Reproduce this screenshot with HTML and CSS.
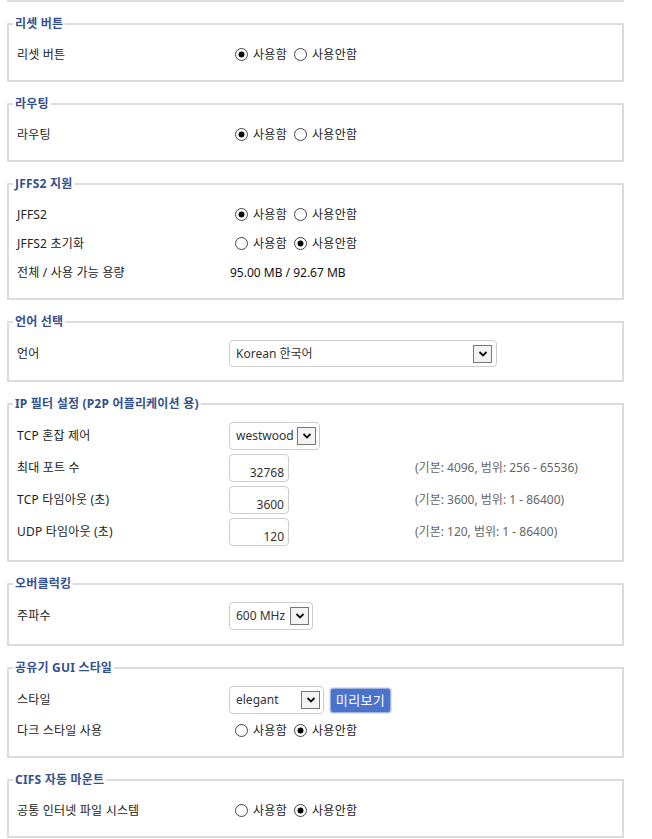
FILE: index.html
```html
<!DOCTYPE html>
<html lang="ko">
<head>
<meta charset="utf-8">
<title>관리 - 시스템</title>
<link rel="stylesheet" href="styles.css">
</head>
<body>
<div class="page">
  <div class="stub"></div>

  <fieldset class="box">
    <legend>리셋 버튼</legend>
    <div class="row">
      <div class="label">리셋 버튼</div>
      <div class="value">
        <label class="opt"><input type="radio" name="reset" checked>사용함</label>
        <label class="opt"><input type="radio" name="reset">사용안함</label>
      </div>
    </div>
  </fieldset>

  <fieldset class="box">
    <legend>라우팅</legend>
    <div class="row">
      <div class="label">라우팅</div>
      <div class="value">
        <label class="opt"><input type="radio" name="routing" checked>사용함</label>
        <label class="opt"><input type="radio" name="routing">사용안함</label>
      </div>
    </div>
  </fieldset>

  <fieldset class="box">
    <legend>JFFS2 지원</legend>
    <div class="row">
      <div class="label">JFFS2</div>
      <div class="value">
        <label class="opt"><input type="radio" name="jffs" checked>사용함</label>
        <label class="opt"><input type="radio" name="jffs">사용안함</label>
      </div>
    </div>
    <div class="row">
      <div class="label">JFFS2 초기화</div>
      <div class="value">
        <label class="opt"><input type="radio" name="jffsclean">사용함</label>
        <label class="opt"><input type="radio" name="jffsclean" checked>사용안함</label>
      </div>
    </div>
    <div class="row">
      <div class="label">전체 / 사용 가능 용량</div>
      <div class="value text">95.00 MB / 92.67 MB</div>
    </div>
  </fieldset>

  <fieldset class="box">
    <legend>언어 선택</legend>
    <div class="row">
      <div class="label">언어</div>
      <div class="value wide">
        <span class="select lang">
          <select><option>Korean 한국어</option></select>
          <span class="arrow"><svg width="10" height="8" viewBox="0 0 10 8"><path d="M1.5 2 L5 5.5 L8.5 2" fill="none" stroke="#111" stroke-width="1.8"/></svg></span>
        </span>
      </div>
    </div>
  </fieldset>

  <fieldset class="box tall">
    <legend>IP 필터 설정 (P2P 어플리케이션 용)</legend>
    <div class="row">
      <div class="label">TCP 혼잡 제어</div>
      <div class="value">
        <span class="select tcp">
          <select><option>westwood</option></select>
          <span class="arrow"><svg width="10" height="8" viewBox="0 0 10 8"><path d="M1.5 2 L5 5.5 L8.5 2" fill="none" stroke="#111" stroke-width="1.8"/></svg></span>
        </span>
      </div>
    </div>
    <div class="row">
      <div class="label">최대 포트 수</div>
      <div class="value"><input class="num" type="text" value="32768"></div>
      <div class="hint">(기본: 4096, 범위: 256 - 65536)</div>
    </div>
    <div class="row">
      <div class="label">TCP 타임아웃 (초)</div>
      <div class="value"><input class="num" type="text" value="3600"></div>
      <div class="hint">(기본: 3600, 범위: 1 - 86400)</div>
    </div>
    <div class="row">
      <div class="label">UDP 타임아웃 (초)</div>
      <div class="value"><input class="num" type="text" value="120"></div>
      <div class="hint">(기본: 120, 범위: 1 - 86400)</div>
    </div>
  </fieldset>

  <fieldset class="box tall">
    <legend>오버클럭킹</legend>
    <div class="row">
      <div class="label">주파수</div>
      <div class="value">
        <span class="select freq">
          <select><option>600 MHz</option></select>
          <span class="arrow"><svg width="10" height="8" viewBox="0 0 10 8"><path d="M1.5 2 L5 5.5 L8.5 2" fill="none" stroke="#111" stroke-width="1.8"/></svg></span>
        </span>
      </div>
    </div>
  </fieldset>

  <fieldset class="box">
    <legend>공유기 GUI 스타일</legend>
    <div class="row">
      <div class="label">스타일</div>
      <div class="value">
        <span class="select style">
          <select><option>elegant</option></select>
          <span class="arrow"><svg width="10" height="8" viewBox="0 0 10 8"><path d="M1.5 2 L5 5.5 L8.5 2" fill="none" stroke="#111" stroke-width="1.8"/></svg></span>
        </span>
        <button class="btn" type="button">미리보기</button>
      </div>
    </div>
    <div class="row">
      <div class="label">다크 스타일 사용</div>
      <div class="value">
        <label class="opt"><input type="radio" name="dark">사용함</label>
        <label class="opt"><input type="radio" name="dark" checked>사용안함</label>
      </div>
    </div>
  </fieldset>

  <fieldset class="box">
    <legend>CIFS 자동 마운트</legend>
    <div class="row">
      <div class="label">공통 인터넷 파일 시스템</div>
      <div class="value">
        <label class="opt"><input type="radio" name="cifs">사용함</label>
        <label class="opt"><input type="radio" name="cifs" checked>사용안함</label>
      </div>
    </div>
  </fieldset>
</div>
</body>
</html>
```

FILE: styles.css
```css
html, body {
  margin: 0;
  padding: 0;
  background: #ffffff;
}

body {
  font-family: "Noto Sans", "Noto Sans CJK KR", sans-serif;
  font-size: 12px;
  line-height: 16px;
  color: #222222;
}

.page {
  margin-left: 7px;
  width: 617px;
}

.stub {
  height: 0;
  border: 2px solid #dddddd;
  border-top: none;
}

.box {
  margin: 14px 0 0 0;
  padding: 8px 8px 11px 8px;
  border: 2px solid #dcdcdc;
  min-width: 0;
}

.box.tall {
  padding-bottom: 12px;
}

.box legend {
  margin-left: -4px;
  padding: 0 2px;
  font-weight: bold;
  color: #34508e;
  line-height: 16px;
  letter-spacing: 0.2px;
}

.row {
  display: grid;
  grid-template-columns: 212px 185px 1fr;
  align-items: center;
  min-height: 29px;
}

.label {
  color: #222222;
  letter-spacing: 0.2px;
}

.value {
  display: flex;
  align-items: center;
}

.value.text {
  padding-left: 1px;
  color: #111111;
}

.value.wide {
  grid-column: 2 / 4;
}

.opt {
  display: inline-flex;
  align-items: center;
  color: #222222;
  margin-right: 1px;
  letter-spacing: 0.3px;
}

.opt input {
  appearance: none;
  -webkit-appearance: none;
  width: 13px;
  height: 13px;
  margin: 0 5px 0 6px;
  border: 1px solid #444444;
  border-radius: 50%;
  background: #ffffff;
  box-sizing: border-box;
}

.opt input:checked {
  background: radial-gradient(circle, #000000 0, #000000 2.7px, #ffffff 3.3px);
}

.select {
  display: inline-flex;
  align-items: center;
  box-sizing: border-box;
  height: 28px;
  margin: 2px 0;
  padding: 0 3px 0 6px;
  border: 1px solid #cccccc;
  border-radius: 4px;
  background: #ffffff;
}

.select select {
  appearance: none;
  -webkit-appearance: none;
  flex: 1;
  min-width: 0;
  border: none;
  background: transparent;
  font: inherit;
  font-size: 12px;
  color: #333333;
  padding: 0;
  margin: 0;
  outline: none;
}

.select .arrow {
  display: inline-flex;
  align-items: center;
  justify-content: center;
  box-sizing: border-box;
  width: 19px;
  height: 18px;
  border: 1px solid #777777;
  background: #f3f3f3;
}

.select.lang {
  width: 268px;
  height: 27px;
  padding-right: 4px;
}

.select.tcp {
  width: 91px;
}

.select.freq {
  width: 84px;
}

.select.style {
  width: 95px;
}

.num {
  box-sizing: border-box;
  width: 60px;
  height: 28px;
  margin: 2px 0;
  padding: 8px 4px 0 4px;
  border: 1px solid #cccccc;
  border-radius: 4px;
  text-align: right;
  font: inherit;
  font-size: 12px;
  color: #333333;
  outline: none;
}

.hint {
  color: #666666;
  padding-left: 1px;
}

.btn {
  box-sizing: border-box;
  width: 61px;
  height: 25px;
  margin-left: 6px;
  padding: 0;
  border: 1px solid #9fb4de;
  border-radius: 3px;
  background: #4b72cc;
  color: #ffffff;
  font: inherit;
  font-size: 13px;
  line-height: 21px;
  letter-spacing: 0.4px;
  box-shadow: 0 0 0 1px #dfe6f3;
}
```
